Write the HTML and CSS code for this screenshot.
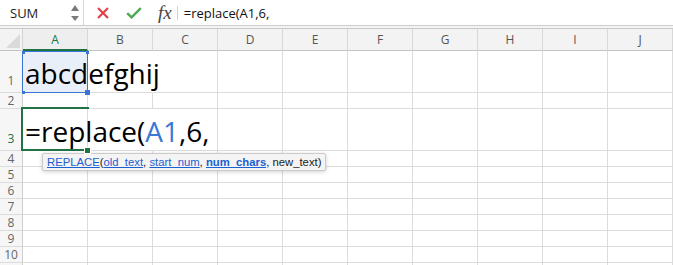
FILE: index.html
```html
<!DOCTYPE html>
<html>
<head>
<meta charset="utf-8">
<title>replace</title>
<link rel="stylesheet" href="styles.css">
</head>
<body>
<div class="topbar">
  <div class="namebox">
    <span>SUM</span>
    <span class="spin"><i class="up"></i><i class="down"></i></span>
  </div>
  <svg class="cancel" width="12" height="12" viewBox="0 0 12 12"><path d="M1 1L11 11M11 1L1 11" stroke="#e2404a" stroke-width="2.2" fill="none"/></svg>
  <svg class="enter" width="16" height="12" viewBox="0 0 16 12"><path d="M1.2 6.2L5.6 10.4L14.8 1.2" stroke="#4fa957" stroke-width="2.4" fill="none"/></svg>
  <span class="fx">fx</span>
  <span class="sep"></span>
  <div class="formula">=replace(A1,6,</div>
</div>
<div class="band"></div>

<div class="sheet">
  <div class="row head">
    <div class="corner"></div>
    <div class="ch sel">A</div><div class="ch">B</div><div class="ch">C</div><div class="ch">D</div><div class="ch">E</div>
    <div class="ch">F</div><div class="ch">G</div><div class="ch">H</div><div class="ch">I</div><div class="ch">J</div>
  </div>
  <div class="row tall">
    <div class="rh">1</div>
    <div class="c ref">
      <span class="txt">abcdefghij</span>
      <span class="h tl"></span><span class="h tr"></span><span class="h bl"></span><span class="h br"></span>
    </div>
    <div class="c spill"></div><div class="c"></div><div class="c"></div><div class="c"></div>
    <div class="c"></div><div class="c"></div><div class="c"></div><div class="c"></div><div class="c"></div>
  </div>
  <div class="row">
    <div class="rh">2</div>
    <div class="c"></div><div class="c"></div><div class="c"></div><div class="c"></div><div class="c"></div>
    <div class="c"></div><div class="c"></div><div class="c"></div><div class="c"></div><div class="c"></div>
  </div>
  <div class="row tall">
    <div class="rh on">3</div>
    <div class="c active">
      <span class="txt">=replace(<span class="refname">A1</span>,6,</span>
      <span class="fill"></span>
    </div>
    <div class="c spill"></div><div class="c"></div><div class="c"></div><div class="c"></div>
    <div class="c"></div><div class="c"></div><div class="c"></div><div class="c"></div><div class="c"></div>
  </div>
  <div class="row">
    <div class="rh">4</div>
    <div class="c"></div><div class="c"></div><div class="c"></div><div class="c"></div><div class="c"></div>
    <div class="c"></div><div class="c"></div><div class="c"></div><div class="c"></div><div class="c"></div>
  </div>
  <div class="row">
    <div class="rh">5</div>
    <div class="c"></div><div class="c"></div><div class="c"></div><div class="c"></div><div class="c"></div>
    <div class="c"></div><div class="c"></div><div class="c"></div><div class="c"></div><div class="c"></div>
  </div>
  <div class="row">
    <div class="rh">6</div>
    <div class="c"></div><div class="c"></div><div class="c"></div><div class="c"></div><div class="c"></div>
    <div class="c"></div><div class="c"></div><div class="c"></div><div class="c"></div><div class="c"></div>
  </div>
  <div class="row">
    <div class="rh">7</div>
    <div class="c"></div><div class="c"></div><div class="c"></div><div class="c"></div><div class="c"></div>
    <div class="c"></div><div class="c"></div><div class="c"></div><div class="c"></div><div class="c"></div>
  </div>
  <div class="row">
    <div class="rh">8</div>
    <div class="c"></div><div class="c"></div><div class="c"></div><div class="c"></div><div class="c"></div>
    <div class="c"></div><div class="c"></div><div class="c"></div><div class="c"></div><div class="c"></div>
  </div>
  <div class="row">
    <div class="rh">9</div>
    <div class="c"></div><div class="c"></div><div class="c"></div><div class="c"></div><div class="c"></div>
    <div class="c"></div><div class="c"></div><div class="c"></div><div class="c"></div><div class="c"></div>
  </div>
  <div class="row">
    <div class="rh">10</div>
    <div class="c"></div><div class="c"></div><div class="c"></div><div class="c"></div><div class="c"></div>
    <div class="c"></div><div class="c"></div><div class="c"></div><div class="c"></div><div class="c"></div>
  </div>
  <div class="row">
    <div class="rh"></div>
    <div class="c"></div><div class="c"></div><div class="c"></div><div class="c"></div><div class="c"></div>
    <div class="c"></div><div class="c"></div><div class="c"></div><div class="c"></div><div class="c"></div>
  </div>
</div>

<div class="tip">
  <a href="#">REPLACE</a>(<a href="#">old_text</a>, <a href="#">start_num</a>, <a href="#" class="cur">num_chars</a>, new_text)
</div>
</body>
</html>
```

FILE: styles.css
```css
body {
  margin: 0;
  width: 673px;
  height: 265px;
  overflow: hidden;
  background: #fff;
  font-family: "Open Sans", sans-serif;
  position: relative;
}

/* formula bar */
.topbar {
  display: flex;
  align-items: center;
  height: 26px;
  border-bottom: 1px solid #cdcdcd;
  box-sizing: border-box;
}
.namebox {
  width: 84px;
  height: 100%;
  border-right: 1px solid #d6d6d6;
  box-sizing: border-box;
  display: flex;
  align-items: center;
  justify-content: space-between;
  padding: 0 4px 0 10px;
  font-size: 13px;
  color: #222;
}
.spin {
  display: flex;
  flex-direction: column;
  gap: 5px;
}
.spin i {
  width: 0;
  height: 0;
  border-left: 4px solid transparent;
  border-right: 4px solid transparent;
}
.spin .up { border-bottom: 6px solid #7b7b7b; }
.spin .down { border-top: 5px solid #7b7b7b; }

.cancel { margin-left: 13px; }
.enter { margin-left: 17px; }
.fx {
  margin-left: 16px;
  font-family: "Liberation Serif", serif;
  font-style: italic;
  font-size: 19px;
  color: #444;
  line-height: 20px;
}
.sep {
  width: 1px;
  height: 14px;
  background: #d3d3d3;
  margin-left: 5px;
}
.formula {
  padding-left: 6px;
  font-size: 13px;
  color: #111;
}
.band {
  height: 3px;
  background: #f4f4f4;
  border-bottom: 1px solid #c9c9c9;
  box-sizing: border-box;
}

/* grid */
.row {
  display: flex;
  height: 16px;
}
.row.tall { height: 42px; }
.row.head { height: 22px; }

.corner {
  flex: none;
  width: 23px;
  background: #f3f3f3;
  border-right: 1px solid #d4d4d4;
  border-bottom: 1px solid #c4c4c4;
  box-sizing: border-box;
  position: relative;
}
.corner::after {
  content: "";
  position: absolute;
  right: 2px;
  bottom: 2px;
  border-left: 14px solid transparent;
  border-bottom: 14px solid #dadada;
}
.ch {
  flex: none;
  width: 65px;
  background: #f3f3f3;
  border-right: 1px solid #d8d8d8;
  border-bottom: 1px solid #c4c4c4;
  box-sizing: border-box;
  display: flex;
  align-items: center;
  justify-content: center;
  font-size: 12px;
  color: #555;
}
.ch.sel {
  color: #217346;
  border-bottom: 2px solid #217346;
  background: #eeeeee;
}
.rh {
  flex: none;
  width: 23px;
  background: #f6f6f6;
  border-right: 1px solid #cfcfcf;
  border-bottom: 1px solid #dcdcdc;
  box-sizing: border-box;
  display: flex;
  align-items: flex-end;
  justify-content: center;
  font-size: 12px;
  line-height: 15px;
  color: #666;
}
.tall .rh { padding-bottom: 4px; }
.rh.on { color: #217346; }

.c {
  flex: none;
  width: 65px;
  border-right: 1px solid #dcdcdc;
  border-bottom: 1px solid #dcdcdc;
  box-sizing: border-box;
  display: flex;
  align-items: flex-end;
  position: relative;
}
.c.spill { border-right-color: transparent; }

.txt {
  white-space: nowrap;
  font-size: 28px;
  line-height: 34px;
  padding: 0 0 2px 2px;
  color: #000;
}
.refname { color: #3b78d6; }

/* range highlighted by the formula */
.ref { background: #e9eff9; }
.ref::after {
  content: "";
  position: absolute;
  left: -1px;
  top: 0;
  right: -1px;
  bottom: -1px;
  border: 1px solid #3a74d4;
}
.h {
  position: absolute;
  width: 3px;
  height: 3px;
  background: #3a74d4;
  z-index: 1;
}
.h.tl { left: -1px; top: 0; }
.h.tr { right: -2px; top: 0; }
.h.bl { left: -1px; bottom: -2px; }
.h.br { right: -3px; bottom: -3px; width: 5px; height: 5px; }

/* active cell, being edited: text runs over its right edge */
.active::after {
  content: "";
  position: absolute;
  left: -2px;
  top: -2px;
  right: -2px;
  bottom: -1px;
  border: 2px solid #217346;
  border-right: none;
}
.fill {
  position: absolute;
  right: -4px;
  bottom: -4px;
  width: 5px;
  height: 5px;
  background: #217346;
  border: 1px solid #fff;
  z-index: 1;
}

/* function tooltip */
.tip {
  position: absolute;
  left: 42px;
  top: 153px;
  height: 18px;
  padding: 0 4px;
  box-sizing: border-box;
  background: #f4f4f4;
  border: 1px solid #cbcbcb;
  border-radius: 2px;
  box-shadow: 0 1px 4px rgba(0, 0, 0, 0.18);
  font-family: "Liberation Sans", Arial, sans-serif;
  font-size: 11.3px;
  line-height: 16px;
  color: #222;
  white-space: nowrap;
}
.tip a {
  color: #1b60d2;
  text-decoration: underline;
}
.tip a.cur { font-weight: bold; }
```
